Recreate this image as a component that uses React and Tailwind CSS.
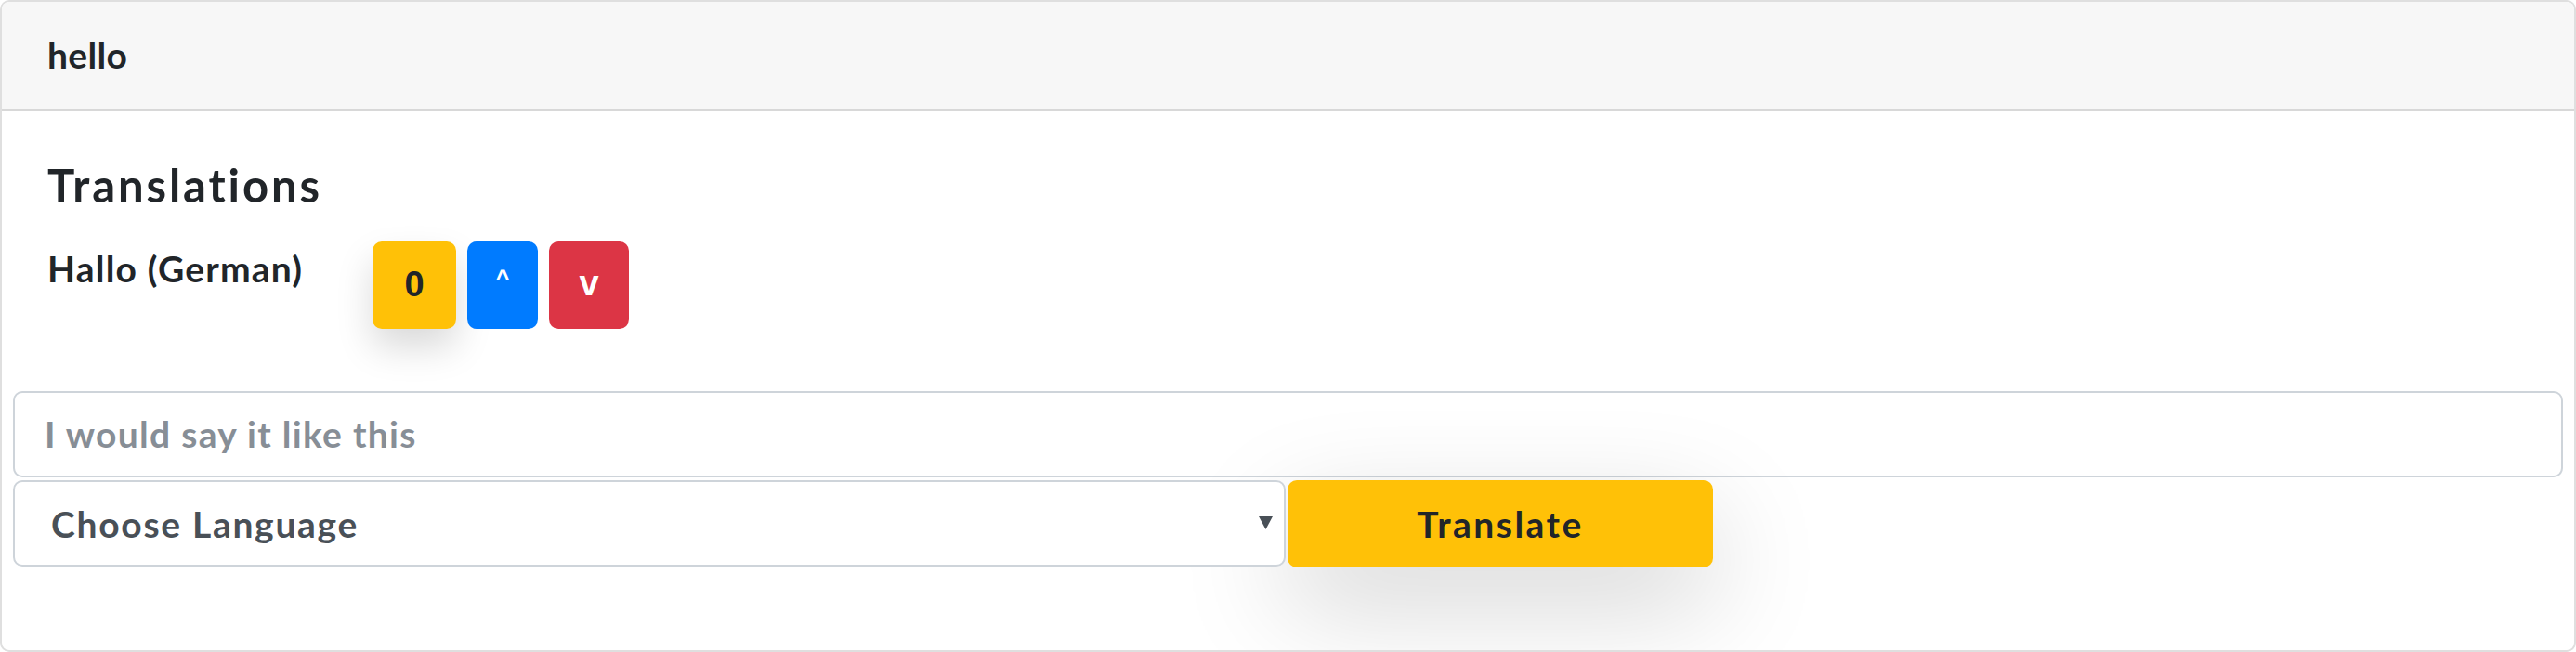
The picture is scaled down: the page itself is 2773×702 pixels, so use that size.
import React from 'react';

function VoteButtons() {
  return (
    <div className="flex items-start gap-[12px] font-['Liberation_Sans',Arial,sans-serif] font-bold">
      <button className="w-[90px] h-[94px] rounded-[10px] bg-[#ffc107] text-[#212529] text-[38px] flex items-center justify-center shadow-[0_20px_39px_rgba(0,0,0,0.15)]">
        0
      </button>
      <button className="w-[76px] h-[94px] rounded-[10px] bg-[#007bff] text-white text-[26px] flex items-start justify-center pt-[21px]">
        ^
      </button>
      <button className="w-[86px] h-[94px] rounded-[10px] bg-[#dc3545] text-white text-[38px] flex items-center justify-center pb-[2px]">
        v
      </button>
    </div>
  );
}

export default function App() {
  return (
    <div className="h-screen bg-white font-[Lato,sans-serif] text-[#212529]">
      <div className="h-[702px] border-2 border-[#dfdfdf] rounded-[10px] flex flex-col overflow-hidden">
        <div className="h-[118px] shrink-0 bg-[#f7f7f7] border-b-[3px] border-[#d8d8d8] px-[49px] flex items-center">
          <span className="text-[39px] font-bold leading-none tracking-[0.3px]">hello</span>
        </div>

        <div className="px-[49px] pt-[50px]">
          <h5 className="text-[49px] font-bold leading-[1.2] mb-[31px] tracking-[2.9px]">Translations</h5>
          <div className="flex items-start">
            <div className="w-[350px] text-[39px] font-bold leading-[1.5] tracking-[1.2px]">Hallo (German)</div>
            <VoteButtons />
          </div>
        </div>

        <div className="px-[12px] mt-[67px]">
          <input
            type="text"
            placeholder="I would say it like this"
            className="w-full h-[93px] border-2 border-[#ced4da] rounded-[10px] px-[32px] text-[39px] font-bold tracking-[1.3px] text-[#495057] placeholder:text-[#878e96] outline-none"
          />
          <div className="flex items-center mt-[3px]">
            <div className="relative w-[1370px] h-[93px]">
              <select className="appearance-none w-full h-full border-2 border-[#ced4da] rounded-[10px] pl-[39px] pr-[60px] text-[39px] font-bold tracking-[1.7px] text-[#495057] bg-white outline-none">
                <option>Choose Language</option>
                <option>German</option>
                <option>French</option>
                <option>Spanish</option>
              </select>
              <svg className="absolute right-[14px] top-[39px] pointer-events-none" width="15" height="14" viewBox="0 0 15 14">
                <path d="M0 0 H15 L7.5 14 Z" fill="#495057" />
              </svg>
            </div>
            <button className="ml-[2px] w-[458px] h-[94px] rounded-[10px] bg-[#ffc107] text-[39px] font-bold tracking-[2.5px] text-[#212529] shadow-[0_39px_118px_rgba(0,0,0,0.175)]">
              Translate
            </button>
          </div>
        </div>
      </div>
    </div>
  );
}
